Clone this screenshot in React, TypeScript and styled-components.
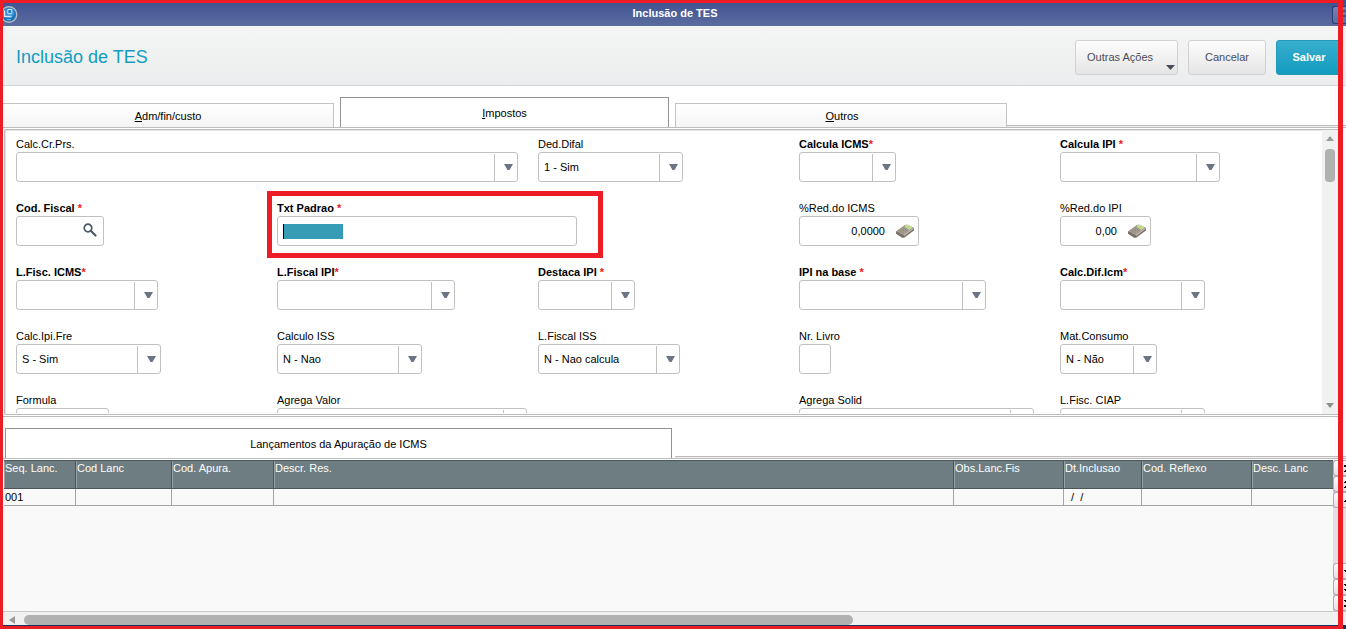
import React, { useId } from 'react';
import styled, { createGlobalStyle, css } from 'styled-components';

const GlobalStyle = createGlobalStyle`
  *, *::before, *::after { box-sizing: border-box; }
  body {
    margin: 0;
    background: #fff;
    color: #000;
    font-family: "Liberation Sans", Arial, sans-serif;
    font-size: 11px;
    line-height: 16px;
    overflow: hidden;
  }
  button, input, select { font: inherit; color: inherit; margin: 0; }
`;

const Window = styled.div`
  position: relative;
  display: flex;
  flex-direction: column;
  height: 100vh;
  overflow: hidden;
`;

const MarkFrame = styled.div`
  position: absolute;
  inset: 0 3px 0 0;
  border: 3px solid #ee1c25;
  border-right-width: 5px;
  pointer-events: none;
`;

const TitleBar = styled.div`
  display: grid;
  grid-template-columns: 18px 1fr 14px;
  align-items: center;
  flex: none;
  height: 26px;
  padding-top: 3px;
  background: linear-gradient(#3c5190, #5c6ca0);
  color: #fff;
  font-weight: bold;
  text-align: center;
`;

const TitleText = styled.span`
  padding-bottom: 3px;
`;

const WindowButton = styled.button`
  display: flex;
  align-items: center;
  justify-content: flex-end;
  width: 14px;
  height: 18px;
  padding: 0;
  border: 1px solid #2b3c78;
  border-right: 0;
  border-radius: 3px 0 0 3px;
  background: linear-gradient(#7482b0, #5d6ca2);
`;

const Header = styled.header`
  display: flex;
  align-items: center;
  justify-content: space-between;
  flex: none;
  height: 60px;
  padding: 3px 4px 0 16px;
  border-bottom: 1px solid #d4d5d6;
  background: linear-gradient(#f4f6f5, #ebedee);
`;

const Heading = styled.h1`
  margin: 0;
  color: #119dc0;
  font-size: 18px;
  font-weight: normal;
  line-height: 24px;
`;

const Actions = styled.div`
  display: flex;
  gap: 10px;
`;

const ActionButton = styled.button<{ $primary?: boolean; $wide?: boolean }>`
  display: flex;
  align-items: center;
  justify-content: ${(p) => (p.$wide ? 'space-between' : 'center')};
  height: 35px;
  min-width: ${(p) => (p.$primary ? 66 : 78)}px;
  padding: ${(p) => (p.$wide ? '0 2px 0 11px' : '0')};
  border: 1px solid #d0d1d2;
  border-radius: 3px;
  background: linear-gradient(#fdfdfd, #e5e5e5);
  color: #4a4d59;
  ${(p) => p.$wide && css`min-width: 103px;`}
  ${(p) =>
    p.$primary &&
    css`
      border-color: #2498b6;
      background: linear-gradient(#38aecd, #129cc0);
      color: #fff;
      font-weight: bold;
    `}
`;

const MenuCaret = styled.svg`
  align-self: flex-end;
  margin-bottom: 4px;
`;

const Tabs = styled.div`
  display: grid;
  grid-template-columns: 334fr 341fr 332fr 339fr;
  align-items: end;
  flex: none;
  height: 42px;
  border-bottom: 1px solid #bcbcbc;
`;

const Tab = styled.button<{ $active?: boolean }>`
  height: ${(p) => (p.$active ? 30 : 24)}px;
  margin: ${(p) => (p.$active ? '0 6px' : '0')};
  padding: ${(p) => (p.$active ? '0' : '0 0 0 2px')};
  border: 1px solid ${(p) => (p.$active ? '#939393' : '#c2c3c4')};
  border-bottom: 0;
  background: ${(p) => (p.$active ? '#fff' : 'linear-gradient(#fff, #f5f5f5)')};
  text-align: center;
`;

const TabFiller = styled.div`
  height: 2px;
  border-top: 1px solid #bcbcbc;
  background: #efefef;
`;

const Key = styled.u`
  text-underline-offset: 1px;
`;

const FormPanel = styled.section`
  display: flex;
  flex: none;
  height: 286px;
  margin: 1px 8px 0 4px;
  border: 1px solid #bcbcbc;
  border-right: 0;
  border-radius: 2px 0 0 2px;
  box-shadow: inset 1px 1px 0 #e4e4e4;
`;

const Fields = styled.div`
  display: grid;
  grid-template-columns: repeat(5, minmax(0, 1fr));
  grid-auto-rows: 46px;
  row-gap: 18px;
  flex: 1;
  height: 283px;
  padding: 6px 1px 0 11px;
  overflow: hidden;
`;

const FieldCell = styled.div<{ $column: number; $span?: number }>`
  position: relative;
  display: flex;
  flex-direction: column;
  grid-column: ${(p) => p.$column} / span ${(p) => p.$span ?? 1};
`;

const Label = styled.label<{ $required?: boolean }>`
  font-weight: ${(p) => (p.$required ? 'bold' : 'normal')};
  white-space: pre;
`;

const Star = styled.span`
  color: #f01820;
`;

const Box = styled.div<{ $width: number }>`
  display: grid;
  grid-template-columns: 1fr;
  align-items: center;
  width: ${(p) => p.$width}px;
  height: 30px;
  > * { grid-area: 1 / 1; }
`;

const control = css`
  appearance: none;
  width: 100%;
  height: 30px;
  padding: 0 5px;
  border: 1px solid #c1c1c1;
  border-radius: 3px;
  background: #fff;
  outline: 0;
`;

const Select = styled.select`
  ${control}
`;

const Input = styled.input<{ $numeric?: boolean; $selected?: boolean }>`
  ${control}
  ${(p) => p.$numeric && css`padding-right: 33px; text-align: right;`}
  ${(p) =>
    p.$selected &&
    css`
      background:
        linear-gradient(#000, #000) 5px 7px / 1px 15px no-repeat,
        linear-gradient(#369bb5, #369bb5) 5px 7px / 60px 15px no-repeat,
        #fff;
    `}
`;

const DropMark = styled.span`
  display: flex;
  align-items: center;
  justify-content: center;
  justify-self: end;
  align-self: end;
  width: 24px;
  height: 28px;
  padding: 0 0 2px 3px;
  border-left: 1px solid #c1c1c1;
  pointer-events: none;
`;

const IconButton = styled.button<{ $inset: number }>`
  display: flex;
  justify-self: end;
  margin-right: ${(p) => p.$inset}px;
  padding: 0;
  border: 0;
  background: none;
`;

const Highlight = styled.div`
  position: absolute;
  top: -9px;
  left: -10px;
  width: 336px;
  height: 67px;
  border: 5px solid #ee1c25;
  pointer-events: none;
`;

const VerticalScroll = styled.div`
  display: flex;
  flex-direction: column;
  align-items: center;
  width: 16px;
  padding: 6px 0;
  background: #f1f1f1;
`;

const VerticalThumb = styled.div`
  width: 10px;
  height: 33px;
  margin: 8px 0 auto;
  border-radius: 4px;
  background: #b1b1b1;
`;

const Splitter = styled.div`
  flex: none;
  height: 12px;
  margin: 1px 8px 0 3px;
  border-top: 1px solid #bcbcbc;
`;

const LowerTabs = styled.div`
  display: grid;
  grid-template-columns: 667fr 671fr;
  column-gap: 3px;
  align-items: end;
  flex: none;
  height: 31px;
  padding-left: 5px;
  border-bottom: 1px solid #bcbcbc;
`;

const LowerTab = styled(Tab)`
  margin: 0;
`;

const GridArea = styled.section`
  display: flex;
  flex: 1;
  min-height: 0;
  margin: 1px 0 0 4px;
`;

const GridBody = styled.div`
  flex: 1;
  background: #f9f9f9;
`;

const Table = styled.table`
  width: 100%;
  table-layout: fixed;
  border-collapse: separate;
  border-spacing: 0;
`;

const HeadCell = styled.th<{ $width?: number }>`
  width: ${(p) => (p.$width ? `${p.$width}px` : 'auto')};
  height: 29px;
  padding: 0 1px;
  border: solid #4c5558;
  border-width: 1px 1px 1px 0;
  background: #6e7d81;
  box-shadow: inset 1px 0 0 #98a3a6;
  color: #fff;
  font-weight: normal;
  line-height: 14px;
  text-align: left;
  vertical-align: top;
  white-space: nowrap;
  &:last-child { border-right: 0; }
`;

const Cell = styled.td`
  height: 17px;
  padding: 0 1px;
  border: solid #a5a5a5;
  border-width: 0 1px 1px 0;
  white-space: pre;
  &:last-child { border-right: 0; }
`;

const GridNav = styled.div`
  display: flex;
  flex-direction: column;
  justify-content: space-between;
  width: 13px;
  background: #e1e1e1;
`;

const NavButton = styled.button`
  display: flex;
  align-items: center;
  justify-content: flex-end;
  width: 13px;
  height: 16px;
  padding: 0;
  border: 1px solid #adadad;
  border-right: 0;
  border-radius: 3px 0 0 3px;
  background: linear-gradient(#fcfcfc, #e2e2e2);
`;

const HorizontalScroll = styled.div`
  display: flex;
  align-items: center;
  flex: none;
  height: 18px;
  padding: 0 0 1px 9px;
  border-top: 1px solid #c8c8c8;
  background: linear-gradient(#f1f1f1, #f1f1f1) 0 0 / 100% 13px no-repeat #17325f;
`;

const HorizontalThumb = styled.div`
  width: 62%;
  height: 10px;
  margin-left: 9px;
  border-radius: 5px;
  background: #b1b1b1;
`;

const Logo = () => (
  <svg width="18" height="20" viewBox="0 0 18 20" aria-hidden="true">
    <circle cx="9" cy="9.500" r="7.700" fill="#1b6fb4" stroke="#b4bdc6" strokeWidth="1.400" />
    <ellipse cx="9" cy="8" rx="5.500" ry="5" fill="#2f8fd2" />
    <path d="M4.500 5.500v6h7" fill="none" stroke="#cfe8f8" strokeWidth="1.500" />
    <path d="M7.800 4.500h4v4.200h-4z" fill="#1c78c0" stroke="#d8eefa" />
    <path d="M7 14.500h4" stroke="#69b7e6" />
  </svg>
);

const Magnifier = () => (
  <svg width="14" height="16" viewBox="0 0 14 16" aria-hidden="true">
    <circle cx="5" cy="5" r="3.800" fill="#fff" stroke="#4f586b" strokeWidth="1.700" />
    <path d="M7.800 7.800l4.700 4.700" stroke="#4f586b" strokeWidth="2.200" strokeLinecap="round" />
  </svg>
);

const Calculator = () => (
  <svg width="18" height="14" viewBox="0 0 18 14" aria-hidden="true">
    <path d="M0 7.500L9 1h3l6 3v2.500L8.500 13.500 6.500 14 0 9.800z" fill="#7b736a" />
    <path d="M.5 7.200L9.500.8h2.300L17.500 4 8 11.200z" fill="#aaa195" />
    <path d="M9 2.200l2-1.400 5 2.700-2.700 2z" fill="#b9e070" stroke="#d9e6c4" strokeWidth=".6" />
    <path d="M3.500 6.500l4 2.600M5.300 5.200l4.300 2.700M7 4l4.300 2.700" stroke="#7c7267" strokeWidth=".9" strokeDasharray="1.300 .7" />
    <path d="M8 11.500l9.500-7" stroke="#ded9d1" strokeWidth=".8" />
  </svg>
);

const Arrow = ({ points, width, height, fill }: { points: string; width: number; height: number; fill: string }) => (
  <svg width={width} height={height} viewBox={`0 0 ${width} ${height}`} aria-hidden="true">
    <polygon points={points} fill={fill} />
  </svg>
);

type FieldSpec = {
  label: string;
  column: number;
  width: number;
  kind?: 'select' | 'text' | 'lookup' | 'number';
  value?: string;
  required?: boolean;
  span?: number;
  marked?: boolean;
};

const fields: FieldSpec[] = [
  { label: 'Calc.Cr.Prs.', column: 1, span: 2, width: 502 },
  { label: 'Ded.Difal', column: 3, width: 145, value: '1 - Sim' },
  { label: 'Calcula ICMS', column: 4, width: 97, required: true },
  { label: 'Calcula IPI ', column: 5, width: 160, required: true },
  { label: 'Cod. Fiscal ', column: 1, width: 88, kind: 'lookup', required: true },
  { label: 'Txt Padrao ', column: 2, width: 300, kind: 'text', required: true, marked: true },
  { label: '%Red.do ICMS', column: 4, width: 120, kind: 'number', value: '0,0000' },
  { label: '%Red.do IPI', column: 5, width: 91, kind: 'number', value: '0,00' },
  { label: 'L.Fisc. ICMS', column: 1, width: 142, required: true },
  { label: 'L.Fiscal IPI', column: 2, width: 178, required: true },
  { label: 'Destaca IPI ', column: 3, width: 97, required: true },
  { label: 'IPI na base ', column: 4, width: 187, required: true },
  { label: 'Calc.Dif.Icm', column: 5, width: 145, required: true },
  { label: 'Calc.Ipi.Fre', column: 1, width: 145, value: 'S - Sim' },
  { label: 'Calculo ISS', column: 2, width: 145, value: 'N - Nao' },
  { label: 'L.Fiscal ISS', column: 3, width: 142, value: 'N - Nao calcula' },
  { label: 'Nr. Livro', column: 4, width: 32, kind: 'text' },
  { label: 'Mat.Consumo', column: 5, width: 97, value: 'N - Não' },
  { label: 'Formula', column: 1, width: 93, kind: 'text' },
  { label: 'Agrega Valor', column: 2, width: 250 },
  { label: 'Agrega Solid', column: 4, width: 235 },
  { label: 'L.Fisc. CIAP', column: 5, width: 145 },
];

const Field = ({ label, column, width, kind = 'select', value = '', required, span, marked }: FieldSpec) => {
  const id = useId();
  return (
    <FieldCell $column={column} $span={span}>
      <Label htmlFor={id} $required={required}>
        {label}
        {required && <Star>*</Star>}
      </Label>
      <Box $width={width}>
        {kind === 'select' ? (
          <>
            <Select id={id} defaultValue={value}>
              <option value={value}>{value}</option>
            </Select>
            <DropMark>
              <Arrow width={9} height={6} points="0,0 9,0 5.500,6 3.500,6" fill="#6b7385" />
            </DropMark>
          </>
        ) : (
          <Input id={id} type="text" defaultValue={value} $numeric={kind === 'number'} $selected={marked} />
        )}
        {kind === 'lookup' && <IconButton $inset={7} aria-label="Pesquisar"><Magnifier /></IconButton>}
        {kind === 'number' && <IconButton $inset={5} aria-label="Calculadora"><Calculator /></IconButton>}
      </Box>
      {marked && <Highlight />}
    </FieldCell>
  );
};

const columns: { title: string; width?: number; value?: string }[] = [
  { title: 'Seq. Lanc.', width: 72, value: '001' },
  { title: 'Cod Lanc', width: 96 },
  { title: 'Cod. Apura.', width: 102 },
  { title: 'Descr. Res.' },
  { title: 'Obs.Lanc.Fis', width: 110 },
  { title: 'Dt.Inclusao', width: 78, value: '  /  /' },
  { title: 'Cod. Reflexo', width: 110 },
  { title: 'Desc. Lanc', width: 81 },
];

const navGroups = [
  [
    { name: 'Primeiro', path: 'M1 1h2v2H1zM2 6h1v1H2zM1 7h2v1H1z' },
    { name: 'Página anterior', path: 'M2 1h1v1H2zM1 2h2v1H1zM2 6h1v1H2zM1 7h2v1H1z' },
    { name: 'Anterior', path: 'M2 4h1v1H2zM1 5h2v1H1z' },
  ],
  [
    { name: 'Próximo', path: 'M1 3h2v1H1zM2 4h1v1H2z' },
    { name: 'Próxima página', path: 'M1 1h2v1H1zM2 2h1v1H2zM1 6h2v1H1zM2 7h1v1H2z' },
    { name: 'Último', path: 'M1 1h2v1H1zM2 2h1v1H2zM1 6h2v2H1z' },
  ],
];

export default function App() {
  return (
    <>
      <GlobalStyle />
      <Window>
        <TitleBar>
          <Logo />
          <TitleText>Inclusão de TES</TitleText>
          <WindowButton aria-label="Fechar">
            <svg width="3" height="9" viewBox="0 0 3 9" aria-hidden="true">
              <path d="M0 1h3M0 6h3" stroke="#1f2c5c" />
            </svg>
          </WindowButton>
        </TitleBar>
        <Header>
          <Heading>Inclusão de TES</Heading>
          <Actions>
            <ActionButton $wide>
              Outras Ações
              <MenuCaret width="9" height="5" viewBox="0 0 9 5" aria-hidden="true">
                <polygon points="0,0 9,0 4.500,5" fill="#4a4d59" />
              </MenuCaret>
            </ActionButton>
            <ActionButton>Cancelar</ActionButton>
            <ActionButton $primary>Salvar</ActionButton>
          </Actions>
        </Header>
        <Tabs>
          <Tab><Key>A</Key>dm/fin/custo</Tab>
          <Tab $active><Key>I</Key>mpostos</Tab>
          <Tab><Key>O</Key>utros</Tab>
          <TabFiller />
        </Tabs>
        <FormPanel>
          <Fields>
            {fields.map((field) => <Field key={field.label} {...field} />)}
          </Fields>
          <VerticalScroll>
            <Arrow width={8} height={5} points="4,0 8,5 0,5" fill="#9b9b9b" />
            <VerticalThumb />
            <Arrow width={8} height={5} points="0,0 8,0 4,5" fill="#8f8f8f" />
          </VerticalScroll>
        </FormPanel>
        <Splitter />
        <LowerTabs>
          <LowerTab $active>Lançamentos da Apuração de ICMS</LowerTab>
          <TabFiller />
        </LowerTabs>
        <GridArea>
          <GridBody>
            <Table>
              <thead>
                <tr>
                  {columns.map((c) => <HeadCell key={c.title} $width={c.width}>{c.title}</HeadCell>)}
                </tr>
              </thead>
              <tbody>
                <tr>
                  {columns.map((c) => <Cell key={c.title}>{c.value}</Cell>)}
                </tr>
              </tbody>
            </Table>
          </GridBody>
          <GridNav>
            {navGroups.map((group) => (
              <div key={group[0].name}>
                {group.map((item) => (
                  <NavButton key={item.name} aria-label={item.name}>
                    <svg width="3" height="9" viewBox="0 0 3 9" aria-hidden="true">
                      <path d={item.path} fill="#000" />
                    </svg>
                  </NavButton>
                ))}
              </div>
            ))}
          </GridNav>
        </GridArea>
        <HorizontalScroll>
          <Arrow width={6} height={8} points="6,0 6,8 0,4" fill="#9b9b9b" />
          <HorizontalThumb />
        </HorizontalScroll>
        <MarkFrame />
      </Window>
    </>
  );
}
